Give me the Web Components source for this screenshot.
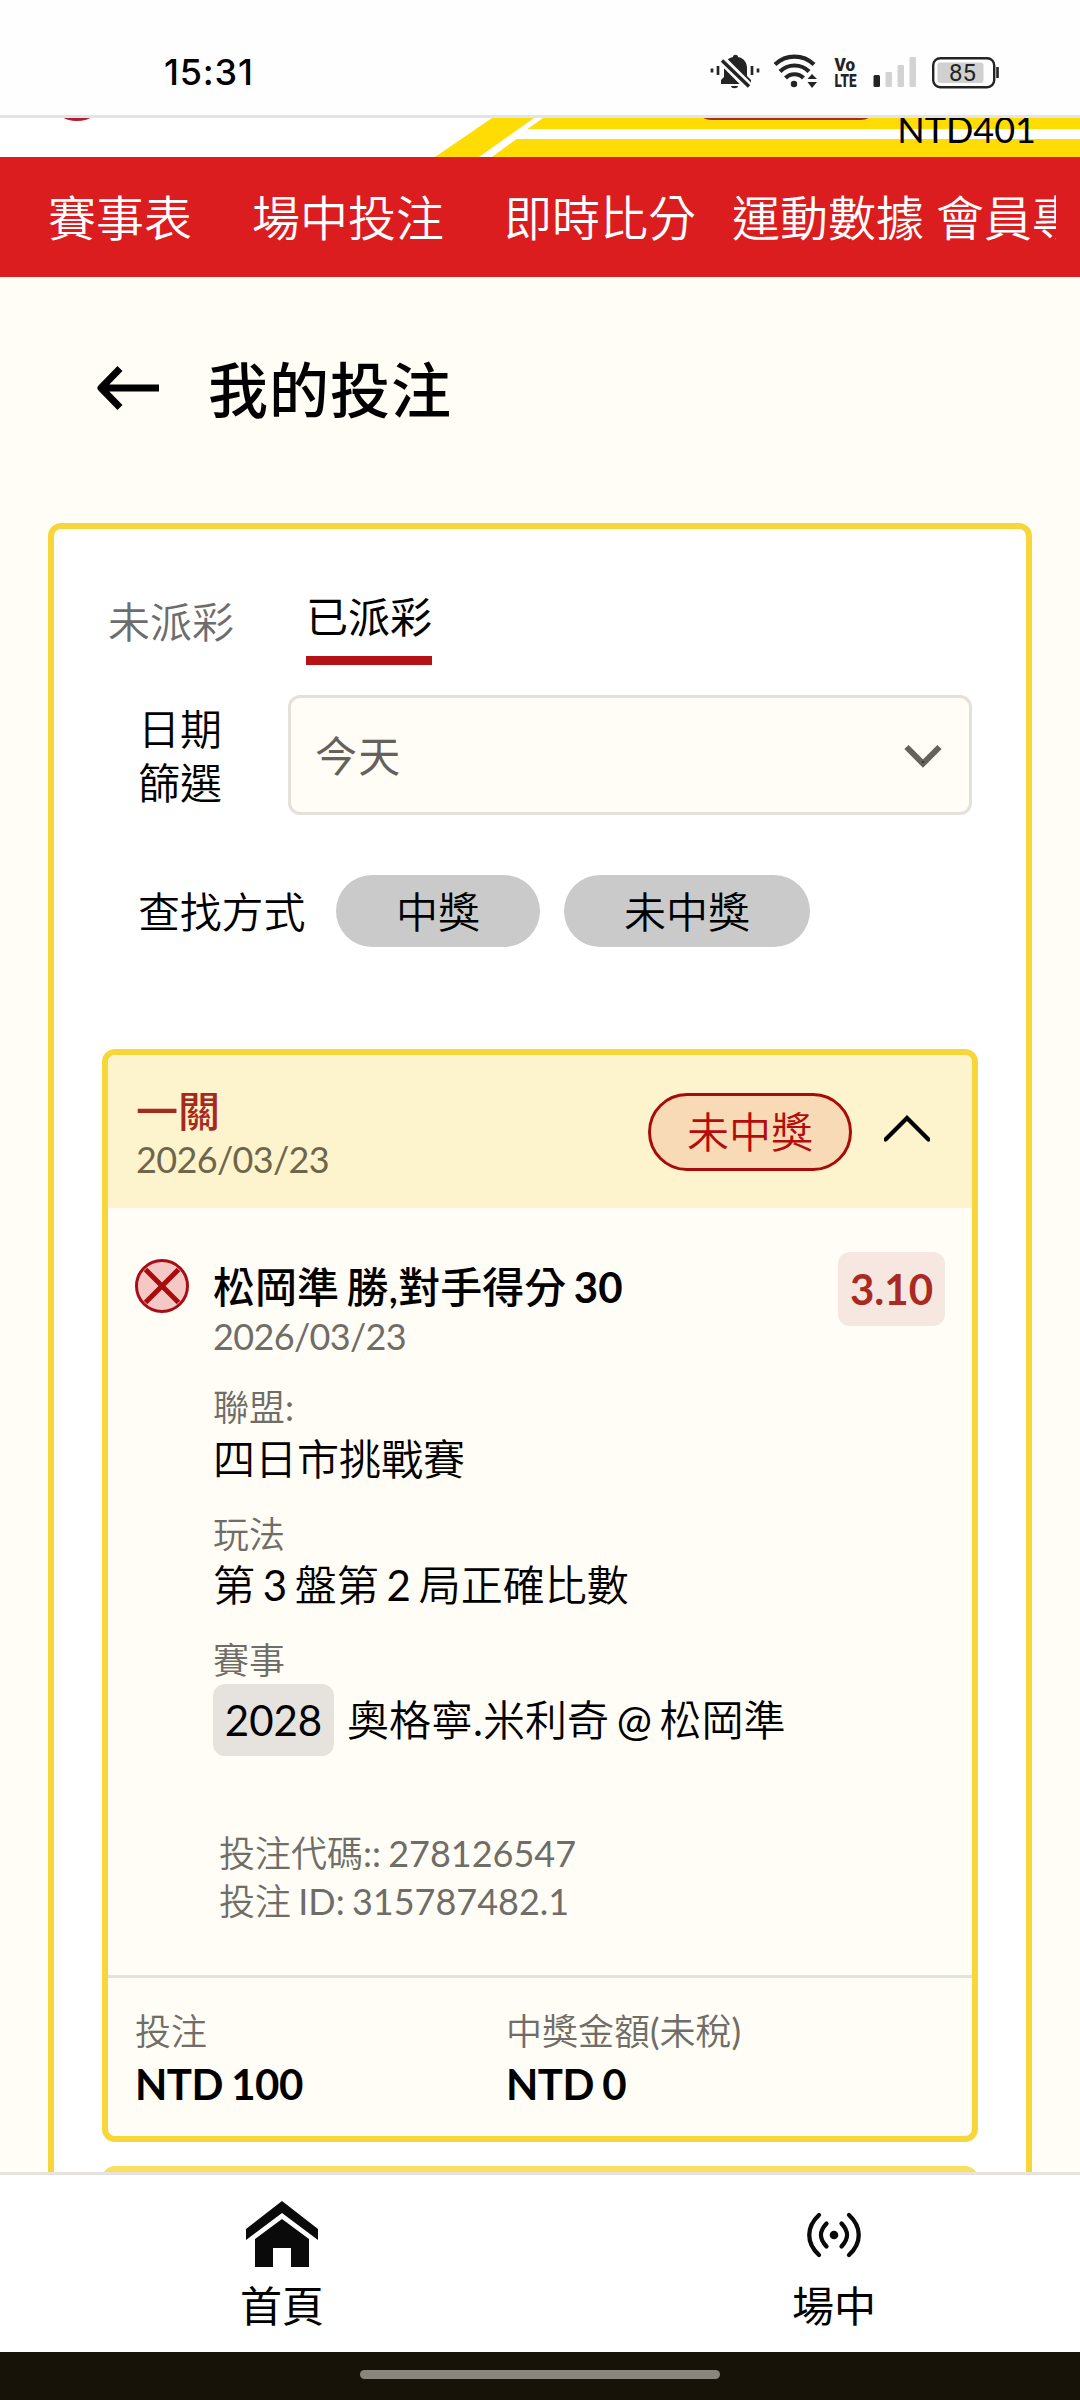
<!DOCTYPE html>
<html lang="zh-Hant">
<head>
<meta charset="utf-8">
<title>我的投注</title>
<style>
html,body{margin:0;padding:0}
body{width:1080px;height:2400px;overflow:hidden;background:#fffdf5;color:#000;
--medium:Lato,"Noto Sans CJK TC",sans-serif;
font-family:Lato,"Noto Sans CJK TC DemiLight","Noto Sans CJK TC",sans-serif;font-size:42px;line-height:50px}
</style>
</head>
<body>
<my-bets-app></my-bets-app>
<script>
function define(name, html){
  const t=document.createElement('template');
  t.innerHTML=html;
  customElements.define(name,class extends HTMLElement{
    constructor(){super();this.attachShadow({mode:'open'}).appendChild(t.content.cloneNode(true));}
  });
}

define('status-bar',`<style>
:host{display:flex;align-items:center;justify-content:space-between;box-sizing:border-box;height:118px;flex:none;padding:29px 80px 0 164px;background:#fefefe;border-bottom:3px solid #e4e4e4}
.time{font:500 36px/44px Inter,sans-serif;letter-spacing:.8px}
.icons{display:flex;align-items:center}
svg{display:block}
text{font-family:Roboto,sans-serif}
</style>
<span class="time"><slot></slot></span>
<span class="icons">
<svg width="290" height="40" viewBox="710 52 290 40" fill="#242424">
 <path d="M721 84v-4l3-3v-9c0-6 4-10 9-11 0-3 5-3 5 0 6 1 9 6 9 11v8l4 4v4z"/>
 <path d="M731 86h7c0 3-7 3-7 0z"/>
 <path d="M722 60l27 27" stroke="#fefefe" stroke-width="9"/>
 <path d="M724 68.500v9l-3 3v3.500h18z"/>
 <path d="M722 60.500l27 26" stroke="#242424" stroke-width="3.500"/>
 <path d="M712 68.500v4M758 68.500v4M718 66v9M752 66v9" stroke="#242424" stroke-width="2.700"/>
 <g fill="none" stroke="#242424" stroke-width="4.200"><path d="M775 64.500c11-10.500 28-10.500 39 0"/><path d="M780 71.500c8-8 21-8 29 0"/><path d="M785.500 78c5-5 13-5 18 0"/></g>
 <circle cx="794" cy="84" r="3.200"/><path d="M807.500 79l4.500-5 5 5zM807.500 82l4.500 6 5-6z"/>
 <text x="834.500" y="71" font-size="19" font-weight="900" textLength="20.500" lengthAdjust="spacingAndGlyphs">Vo</text>
 <text x="834.500" y="87" font-size="19" font-weight="900" textLength="22" lengthAdjust="spacingAndGlyphs">LTE</text>
 <rect x="873.500" y="75" width="6.500" height="12" rx="1.500"/>
 <g fill="#d3d3d3"><rect x="885.500" y="72" width="6.500" height="15" rx="1"/><rect x="897.500" y="65" width="6.500" height="22" rx="1"/><rect x="909.500" y="57" width="6.500" height="30" rx="1"/></g>
 <rect x="933.200" y="58.200" width="61" height="29" rx="7" fill="none" stroke="#242424" stroke-width="2.400"/>
 <rect x="937.500" y="62.500" width="46" height="20.500" rx="3" fill="#d0d0d0"/>
 <path d="M997.500 67v11" stroke="#242424" stroke-width="2.600"/>
 <text x="949" y="81" font-size="24" textLength="27">85</text>
</svg></span>`);

define('site-banner',`<style>
:host{display:grid;height:39px;flex:none;overflow:hidden;background:#fff}
svg,span{grid-area:1/1}
svg{display:block}
span{justify-self:end;margin:-11px 44px 0 0;font-size:36px;line-height:44px;height:44px}
</style>
<svg width="1080" height="39" viewBox="0 118 1080 39">
<g fill="#fedc04"><path d="M435 157l57-39h42l-55 39zM527.500 129l15.500-11h537v11zM492 157l24.500-18H1080v18z"/></g>
<ellipse cx="77" cy="103" rx="24" ry="18" fill="#b01e31"/>
<rect x="696" y="90" width="180" height="30" rx="15" fill="#a72c22"/>
</svg><span><slot></slot></span>`);

define('main-nav',`<style>
:host{display:block;height:120px;flex:none;background:#dc1d20;padding:0 24px 0 48px}
div{display:flex;height:121px;align-items:center;overflow:hidden;color:#fff;font-size:48px;line-height:60px;white-space:nowrap}
::slotted(*){flex:none;width:var(--w)}
</style><div><slot></slot></div>`);

define('page-title',`<style>
:host{display:flex;align-items:center;height:72px;gap:48px;margin:77px 0 97px 96px;font-size:60px;line-height:72px;font-family:var(--medium);font-weight:500;letter-spacing:1px}
svg{flex:none;margin-top:-5px}
</style><svg width="64" height="44" viewBox="0 0 64 44" fill="none" stroke="#000" stroke-width="7"><path d="M24 2.500L5 22l19 19.500M5 22h58" stroke-linejoin="round"/></svg><slot></slot>`);

define('bet-panel',`<style>
:host{display:block;box-sizing:border-box;height:1800px;margin:0 48px;background:#fff;border:6px solid #f7d63a;border-radius:13px;padding:63px 48px 0}
</style><slot></slot>`);

define('tab-strip',`<style>:host{display:flex;gap:72px;padding-left:6px;height:73px}</style><slot></slot>`);
define('tab-item',`<style>
:host{display:block;box-sizing:border-box;height:73px;padding-top:5px;color:#6d6d6d}
:host([active]){padding-top:0;color:#000;font-family:var(--medium);border-bottom:9px solid #b51217}
</style><slot></slot>`);

define('date-filter',`<style>
:host{display:flex;align-items:center;margin:30px 6px 0 36px}
label{width:150px;flex:none;line-height:54px;padding-top:1px}
.select{flex:1;box-sizing:border-box;height:120px;border:3px solid #e3e1da;border-radius:12px;background:#fffdf5;display:flex;align-items:center;justify-content:space-between;padding:2px 27px 0 24px;color:#65625b;font-family:var(--medium);letter-spacing:1.300px}
.l{width:84px;display:block}
</style><label><span class="l"><slot name="label"></slot></span></label><div class="select"><slot></slot>
<svg width="38" height="24" viewBox="0 0 38 24" fill="none" stroke="#65625b" stroke-width="6"><path d="M2.500 3l16.500 16.500L35.500 3"/><circle cx="19" cy="18" r="1" stroke="none" fill="#222"/></svg></div>`);

define('result-filter',`<style>
:host{display:flex;align-items:center;gap:24px;height:72px;margin:60px 0 102px 36px}
.label{width:174px;flex:none;padding-top:2px;letter-spacing:-.2px}
</style><span class="label"><slot name="label"></slot></span><slot></slot>`);
define('filter-pill',`<style>:host{display:block;height:72px;line-height:74px;padding:0 60px;border-radius:36px;background:#cacaca}</style><slot></slot>`);

define('bet-card',`<style>
:host{display:block;box-sizing:border-box;border:6px solid #f7d63a;border-radius:13px;background:#fffdf5;overflow:hidden;margin-bottom:24px}
.head{display:flex;align-items:center;box-sizing:border-box;height:153px;padding:0 42px 0 28px;background:#fdf3cc}
.kind{color:#a6291f;font-family:var(--medium);font-weight:500}
.date{font-size:36px;line-height:44px;color:#6d664b;letter-spacing:-.65px;margin-top:1px}
.names{flex:1;padding-top:3px}
svg{margin:-8px 0 0 32px}
</style>
<div class="head"><div class="names"><div class="kind"><slot name="kind"></slot></div><div class="date"><slot name="date"></slot></div></div>
<slot name="badge"></slot>
<svg width="46" height="28" viewBox="0 0 46 28" fill="none" stroke="#000" stroke-width="4.300"><path d="M1.500 25.500L23 4l21.500 21.500" stroke-linecap="round"/></svg></div>
<slot></slot>`);
define('status-badge',`<style>:host{display:block;box-sizing:border-box;height:78px;line-height:72px;padding:0 36px;border:3px solid #a80c0a;border-radius:39px;background:#f8dab6;color:#b40b0b}</style><slot></slot>`);

define('bet-leg',`<style>
:host{display:flex;align-items:flex-start;height:573px;padding:44px 27px 0 27px}
.icon{flex:none;margin:7px 24px 0 0;width:54px;height:54px}
.body{flex:1;padding-top:10px}
.title{font-family:var(--medium);font-weight:500;word-spacing:-3px}
.date{font-size:36px;line-height:44px;color:#6f6d68;margin:2px 0 27px;letter-spacing:-.65px}
.odds{flex:none;box-sizing:border-box;width:107px;height:74px;line-height:74px;text-align:center;border-radius:12px;background:#f6e7e1;color:#a82a22;font-weight:700}
</style>
<svg class="icon" viewBox="0 0 54 54"><circle cx="27" cy="27" r="25.500" fill="#f4c8c5" stroke="#a80c14" stroke-width="3"/><path d="M10.500 10.500l33 33M43.500 10.500l-33 33" stroke="#a80c0c" stroke-width="5"/></svg>
<div class="body"><div class="title"><slot name="title"></slot></div><div class="date"><slot name="date"></slot></div><slot></slot></div>
<div class="odds"><slot name="odds"></slot></div>`);
define('bet-field',`<style>
:host{display:block;margin-bottom:28px}
.label{font-size:36px;line-height:44px;color:#6f6d68}
.value{display:flex;align-items:center;min-height:50px;padding-top:var(--lead,4.500px);white-space:nowrap;word-spacing:-3px}
</style><div class="label"><slot name="label"></slot></div><div class="value"><slot></slot></div>`);
define('event-code',`<style>:host{display:block;height:72px;line-height:72px;width:121px;text-align:center;border-radius:12px;background:#e6e2dd;margin-right:13px}</style><slot></slot>`);
define('bet-ids',`<style>:host{display:block;box-sizing:border-box;height:150px;padding:4px 0 0 111px;font-size:36px;line-height:48px;color:#6f6d68;word-spacing:-2px}</style><slot></slot>`);
define('bet-totals',`<style>:host{display:flex;box-sizing:border-box;height:161px;border-top:3px solid #e4e2dc;padding:31px 0 0 27px}</style><slot></slot>`);
define('total-item',`<style>
:host{display:block;width:371px;flex:none}
.l{font-size:36px;line-height:44px;color:#6f6d68}
.v{font-weight:700;margin-top:6px;letter-spacing:-.5px;word-spacing:-1.500px}
</style><div class="l"><slot name="label"></slot></div><div class="v"><slot></slot></div>`);

define('bottom-nav',`<style>
:host{display:flex;box-sizing:border-box;height:180px;flex:none;background:#fff;border-top:3px solid #e6e2de;overflow:hidden}
</style><slot></slot>`);
define('bottom-item',`<style>
:host{display:flex;flex-direction:column;align-items:center;flex:none;box-sizing:border-box;width:var(--w);padding-top:26px;font-family:var(--medium)}
.i{height:80px}
</style><div class="i"><slot name="icon"></slot></div><slot></slot>`);
define('gesture-bar',`<style>:host{display:flex;justify-content:center;height:48px;flex:none;background:#171309}i{display:block;width:360px;height:9px;margin-top:18px;border-radius:5px;background:#8b867d}</style><i></i>`);

define('my-bets-app',`<style>
:host{display:flex;flex-direction:column;height:2400px;width:1080px}
main{flex:1;min-height:0;overflow:hidden;display:flow-root}
svg{display:block}
b{font-weight:700}
</style>
<status-bar>15:31</status-bar>
<site-banner>NTD401</site-banner>
<main-nav><span style="--w:204px">賽事表</span><span style="--w:252px">場中投注</span><span style="--w:228px">即時比分</span><span style="--w:204px">運動數據</span><span style="--w:192px">會員專區</span></main-nav>
<main>
<page-title>我的投注</page-title>
<bet-panel>
<tab-strip><tab-item>未派彩</tab-item><tab-item active>已派彩</tab-item></tab-strip>
<date-filter><span slot="label">日期篩選</span>今天</date-filter>
<result-filter><span slot="label">查找方式</span><filter-pill>中獎</filter-pill><filter-pill>未中獎</filter-pill></result-filter>
<bet-card>
<span slot="kind">一關</span><span slot="date">2026/03/23</span><status-badge slot="badge">未中獎</status-badge>
<bet-leg>
<span slot="title">松岡準 勝,對手得分 <b>30</b></span><span slot="date">2026/03/23</span><span slot="odds">3.10</span>
<bet-field><span slot="label">聯盟:</span>四日市挑戰賽</bet-field>
<bet-field><span slot="label">玩法</span>第 3 盤第 2 局正確比數</bet-field>
<bet-field style="--lead:2px"><span slot="label">賽事</span><event-code>2028</event-code>奧格寧.米利奇 @ 松岡準</bet-field>
</bet-leg>
<bet-ids><div>投注代碼:: 278126547</div><div>投注 ID: 315787482.1</div></bet-ids>
<bet-totals><total-item><span slot="label">投注</span>NTD 100</total-item><total-item><span slot="label">中獎金額(未稅)</span>NTD 0</total-item></bet-totals>
</bet-card>
<bet-card style="border-color:#f9e060"></bet-card>
</bet-panel>
</main>
<bottom-nav>
<bottom-item style="--w:564px"><svg slot="icon" width="72" height="66" viewBox="246 2201 72 66" fill="#0a0a0a"><path d="M282 2201l36 28v11l-36-27-36 27v-11zM282 2219l27 20v28h-18v-19h-18v19h-18v-28z"/></svg>首頁</bottom-item>
<bottom-item style="--w:540px"><svg slot="icon" width="56" height="66" viewBox="806 2201 56 66" fill="none" stroke="#0a0a0a" stroke-width="4.300" stroke-linecap="round"><path d="M819 2215c-13 12-13 28 0 40M849 2215c13 12 13 28 0 40M826.500 2223.500c-7.500 8-7.500 15 0 23M841.500 2223.500c7.500 8 7.500 15 0 23"/><circle cx="834" cy="2235" r="4.300" fill="#0a0a0a" stroke="none"/></svg>場中</bottom-item>
</bottom-nav>
<gesture-bar></gesture-bar>`);
</script>
</body>
</html>
